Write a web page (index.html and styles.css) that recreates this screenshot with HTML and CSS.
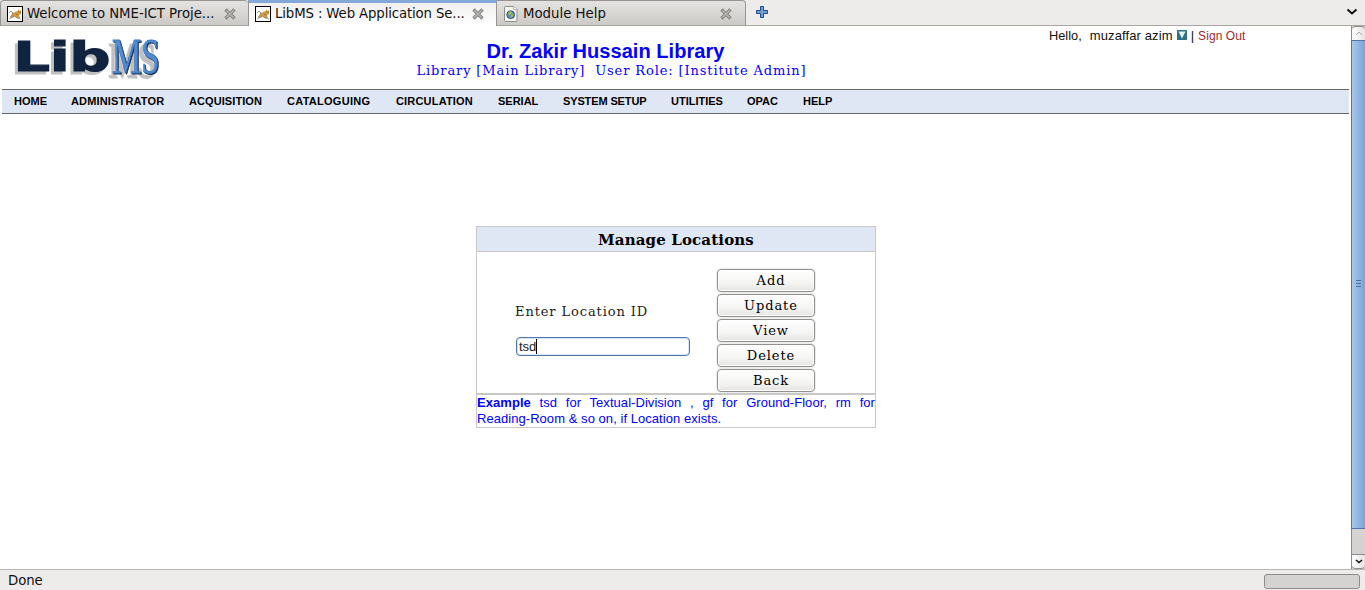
FILE: index.html
```html
<!DOCTYPE html>
<html lang="en">
<head>
<meta charset="utf-8">
<title>LibMS : Web Application Service</title>
<link rel="stylesheet" href="styles.css">
</head>
<body>
<svg class="defs" width="0" height="0">
  <symbol id="cat" viewBox="0 0 16 16">
    <rect x=".5" y=".5" width="15" height="15" fill="#fff" stroke="#000"/>
    <path d="M5 6L7 7l1-1 3-1V3l2 2 1-1v4l-2 1 1 3H9l-1-2-3 2H3l2-3z" fill="#cf9b3e"/>
    <path d="M2 7l2-2 2 2-1 2-2 2M2 13l2-1M8 10l2 2 4 1M4 12l4-2" fill="none" stroke="#8d867e" stroke-width=".8"/>
    <path d="M11 6h1M13 6h1M9 8l2 1" stroke="#815b28" stroke-width=".7"/>
  </symbol>
  <symbol id="close" viewBox="0 0 12 12">
    <path d="M1.500 1.500l9 9M10.500 1.500l-9 9" stroke="#858581" stroke-width="3.400"/>
    <path d="M2.200 2.200l7.600 7.600M9.800 2.200L2.200 9.800" stroke="#b5b5b1" stroke-width="1.400"/>
  </symbol>
</svg>
<header class="tabs">
  <div class="tab first"><svg class="favicon"><use href="#cat"/></svg><span class="label">Welcome to NME-ICT Proje...</span><svg class="close"><use href="#close"/></svg></div>
  <div class="tab active"><svg class="favicon"><use href="#cat"/></svg><span class="label">LibMS : Web Application Se...</span><svg class="close"><use href="#close"/></svg></div>
  <div class="tab third">
    <svg class="favicon" viewBox="0 0 16 16"><path d="M1.500 1.500Q1.500.5 2.500.5h8l3.500 3v11q0 1-1 1H2.500q-1 0-1-1z" fill="#f5f5f2" stroke="#8b8d87"/><path d="M10.500.5v3H14" fill="#fff" stroke="#b4b5b0"/><circle cx="7.700" cy="8.700" r="3.900" fill="#6893ae" stroke="#35546f"/><path d="M5 7l2-2 2 1-1 2-2 1zM8 9l2-1v2l-2 2z" fill="#a9bd54"/></svg>
    <span class="label">Module Help</span><svg class="close"><use href="#close"/></svg>
  </div>
  <svg class="plus" viewBox="0 0 12 12"><path d="M4.500.5h3v4h4v3h-4v4h-3v-4h-4v-3h4z" fill="#729fcf" stroke="#204a87"/></svg>
  <svg class="tablist" viewBox="0 0 12 8"><path d="M1.500 1.500L6 5.500l4.500-4" fill="none" stroke="#111" stroke-width="2"/></svg>
</header>
<div class="view">
  <main class="page">
    <div class="banner">
      <svg class="logo" viewBox="0 0 160 46">
        <text class="lib" x="11.500" y="36.500" textLength="97" lengthAdjust="spacingAndGlyphs">Lib</text>
        <text class="ms" x="110" y="38.500" textLength="47.500" lengthAdjust="spacingAndGlyphs">MS</text>
      </svg>
      <div class="heading">
        <h1 class="library">Dr. Zakir Hussain Library</h1>
        <p class="role">Library [Main Library]&nbsp; User Role: [Institute Admin]</p>
      </div>
      <div class="user"><span class="hello">Hello,</span><span>muzaffar azim</span><svg class="userdrop" viewBox="0 0 10 10"><path d="M0 0h10v10H0z" fill="#2f7285"/><path d="M1.500 1.500h7L5 8.500z" fill="#e6f1f4"/></svg><span>|</span><a class="signout">Sign Out</a></div>
    </div>
    <nav class="menu">
      <a class="item home">HOME</a><a class="item admin">ADMINISTRATOR</a><a class="item acq">ACQUISITION</a><a class="item cat">CATALOGUING</a><a class="item circ">CIRCULATION</a><a class="item serial">SERIAL</a><a class="item setup">SYSTEM SETUP</a><a class="item util">UTILITIES</a><a class="item opac">OPAC</a><a class="item">HELP</a>
    </nav>
    <section class="panel">
      <h2 class="title">Manage Locations</h2>
      <div class="form">
        <div class="field">
          <label class="prompt">Enter Location ID</label>
          <div class="input">tsd<span class="caret"></span></div>
        </div>
        <div class="actions">
          <button class="button">Add</button>
          <button class="button">Update</button>
          <button class="button">View</button>
          <button class="button">Delete</button>
          <button class="button">Back</button>
        </div>
      </div>
      <p class="example"><b>Example</b> tsd for Textual-Division , gf for Ground-Floor, rm for Reading-Room &amp; so on, if Location exists.</p>
    </section>
  </main>
  <aside class="scroll">
    <div class="arrow up"><svg width="8" height="5" viewBox="0 0 8 5"><path d="M1 4l3-3 3 3" fill="none" stroke="#aaa"/></svg></div>
    <div class="thumb"><i class="grip"></i></div>
    <div class="arrow down"><svg width="8" height="5" viewBox="0 0 8 5"><path d="M1 1l3 2.500L7 1" fill="none" stroke="#111" stroke-width="1.500"/></svg></div>
  </aside>
</div>
<footer class="status"><span>Done</span><div class="progress"></div></footer>
</body>
</html>
```
FILE: styles.css
```css
* { box-sizing: border-box; }
body { margin: 0; width: 1365px; height: 590px; overflow: hidden; background: #fff; display: flex; flex-direction: column; }
.defs { position: absolute; }
h1, h2, p { margin: 0; }

.tabs { height: 26px; flex: none; display: flex; align-items: flex-start; background: #edecea; border-bottom: 1px solid #aaa7a3; font-family: "DejaVu Sans", sans-serif; color: #111; }
.tab { display: flex; height: 26px; width: 249px; border: 1px solid #989590; border-bottom-color: #aaa7a3; border-radius: 4px 4px 0 0; background: linear-gradient(#e4e3e1, #cccac7); padding: 5px 0 0 6px; }
.first { width: 248px; border-right: 0; }
.active { border-top: 3px solid #84a9d8; border-radius: 0; border-bottom: 0; background: linear-gradient(#f1f0ef, #fff); padding-top: 3px; }
.third { border-left: 0; border-radius: 0 4px 0 0; }
.favicon { width: 16px; height: 16px; flex: none; }
.label { margin-left: 4px; width: 195px; line-height: 16px; white-space: nowrap; font-size: 13.3px; letter-spacing: -.04px; }
.active .label { line-height: 15px; letter-spacing: -.13px; }
.third .label { letter-spacing: 0; }
.close { width: 12px; height: 12px; margin-top: 2px; flex: none; margin-left: 2px; }
.plus { width: 12px; height: 12px; margin: 6px 0 0 10px; }
.tablist { width: 12px; height: 8px; margin: 8px 7px 0 auto; }

.view { display: flex; height: 543px; flex: none; }
.page { width: 1351px; padding-left: 2px; }
.banner { height: 63px; display: flex; }
.logo { width: 160px; height: 46px; margin-top: 8px; flex: none; overflow: visible; }
.lib { font: 700 41px "DejaVu Sans", sans-serif; fill: #10233f; stroke: #10233f; stroke-width: 1.2; filter: drop-shadow(-3px 3px 0 #c0c0c0); }
.ms { font: 400 50px "Liberation Serif", serif; fill: #538bd2; stroke: #4179bf; stroke-width: .8; filter: drop-shadow(1px 1px 0 #142c4d) drop-shadow(-4px 4px 0 #c0c0c0); }
.heading { width: 887px; text-align: center; padding-top: 13px; color: #00f; flex: none; }
.library { font: bold 20px/25px "Liberation Sans", Arial, sans-serif; letter-spacing: .04px; }
.role { font: 13px/13px "DejaVu Serif", serif; letter-spacing: .88px; white-space: pre; padding-left: 12px; }
.user { display: flex; font: 13px/20px "Liberation Sans", Arial, sans-serif; color: #111; white-space: nowrap; }
.hello { margin-right: 8px; font-size: 12.8px; }
.hello + span { letter-spacing: .12px; }
.userdrop { width: 10px; height: 10px; margin: 4px 4px 0; flex: none; }
.signout { color: #a52a2a; margin-left: 4px; font-size: 12px; letter-spacing: .08px; }

.menu { width: 1347px; height: 25px; border: solid #666; border-width: 1px 0; background: #e0e7f4; display: flex; padding-left: 12px; font: bold 11px/23px "Liberation Sans", Arial, sans-serif; color: #000; }
.item { flex: none; white-space: nowrap; }
.home { width: 57px; }
.admin { width: 118px; letter-spacing: .16px; }
.acq { width: 98px; letter-spacing: .08px; }
.cat { width: 109px; letter-spacing: .28px; }
.circ { width: 102px; letter-spacing: .18px; }
.serial { width: 65px; }
.setup { width: 108px; letter-spacing: -.13px; }
.util { width: 76px; }
.opac { width: 56px; }

.panel { width: 400px; height: 202px; margin: 112px 0 0 474px; border: 1px solid #c8c8c8; }
.title { height: 25px; border-bottom: 1px solid #c8c8c8; background: #e0e7f4; text-align: center; font: bold 15px/26px "DejaVu Serif", serif; letter-spacing: .14px; color: #000; }
.form { height: 143px; display: flex; border-bottom: 2px solid #c8c8c8; }
.field { width: 240px; padding: 50px 0 0 38px; display: flex; flex-direction: column; }
.prompt { font: 13px/20px "DejaVu Serif", serif; letter-spacing: .89px; color: #222; }
.input { width: 174px; height: 19px; margin: 15px 0 0 1px; border: 1px solid #4f77aa; border-radius: 4px; box-shadow: inset 0 0 0 1px #d8e5f5; padding-left: 2px; display: flex; font: 13px/18px "Liberation Sans", Arial, sans-serif; color: #222; }
.caret { width: 1px; height: 15px; margin-top: 1px; background: #000; }
.actions { display: flex; flex-direction: column; gap: 2px; padding-top: 17px; width: 98px; }
.button { width: 98px; height: 23px; flex: none; border: 1px solid #92908d; border-radius: 4px; box-shadow: inset 0 0 0 1px #fff, 0 0 0 1px #eee; background: linear-gradient(#fff, #f5f5f4 60%, #e5e4e2); padding: 1px 0 0 10px; font: 13px/20px "DejaVu Serif", serif; letter-spacing: .92px; color: #000; }
.example { text-align: justify; font: 13px/16px "Liberation Sans", Arial, sans-serif; letter-spacing: .05px; color: #00f; }

.scroll { width: 14px; display: flex; flex-direction: column; border-left: 1px solid #8c8b88; background: #d4d3d1; }
.arrow { height: 14px; flex: none; display: flex; align-items: center; justify-content: center; background: linear-gradient(90deg, #fff, #e4e3e1); border: 1px solid #8c8b88; border-width: 1px 0; }
.up { border-radius: 4px 4px 0 0; border-bottom: 0; }
.down { height: 15px; margin-top: auto; border-radius: 0 0 4px 4px; }
.thumb { height: 489px; border: solid #4f75a8; border-width: 1px 0 1px 1px; margin-left: -1px; background: linear-gradient(90deg, #abc7ea, #79a2d9); display: flex; align-items: center; justify-content: center; }
.grip { width: 5px; height: 7px; margin-bottom: 2px; background: repeating-linear-gradient(#496d9c 0 1px, transparent 1px 3px); }

.status { height: 21px; flex: none; background: #edecea; border-top: 1px solid #b8b6b3; display: flex; justify-content: space-between; padding: 0 5px 0 8px; font: 13.3px/21px "DejaVu Sans", sans-serif; letter-spacing: -.1px; color: #111; }
.progress { width: 96px; height: 15px; margin-top: 4px; border: 1px solid #8e8c89; border-radius: 3px; background: #d4d3d1; }
```
